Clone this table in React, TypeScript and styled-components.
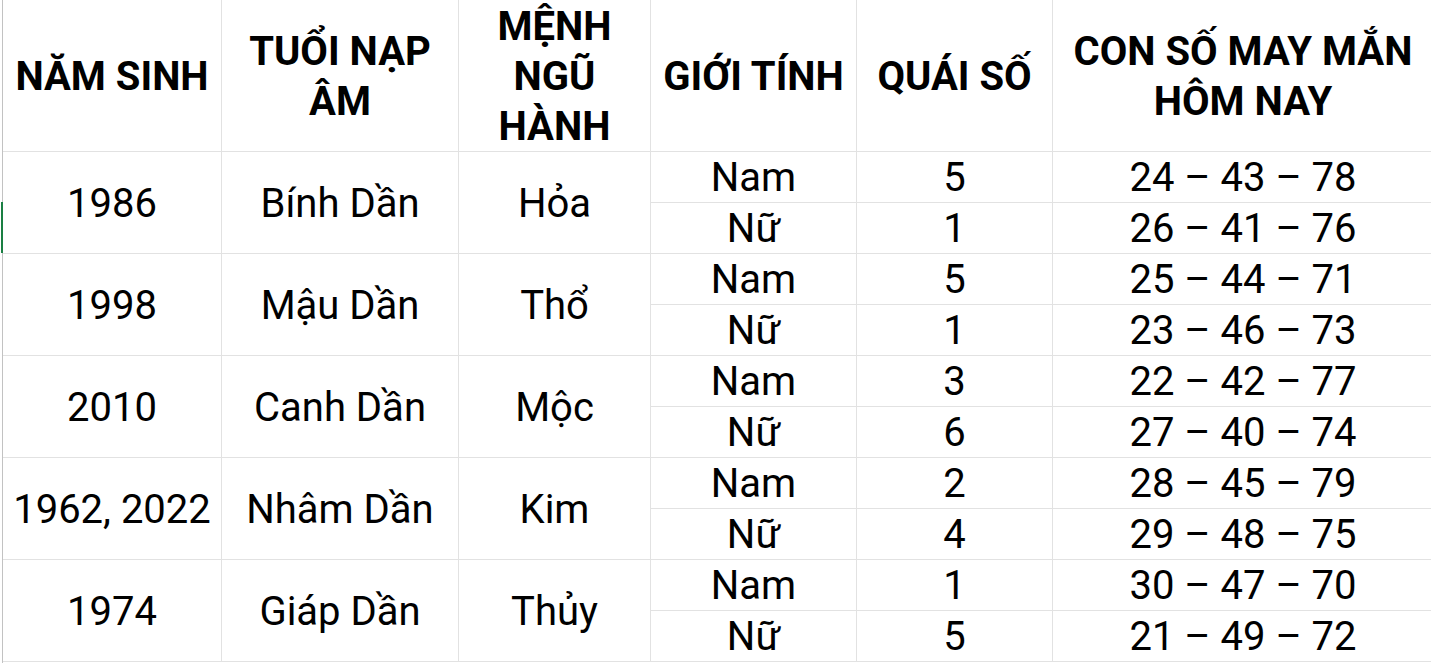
import React from "react";
import styled, { createGlobalStyle } from "styled-components";

const Global = createGlobalStyle`
  html, body {
    margin: 0;
    padding: 0;
    background: #ffffff;
    overflow: hidden;
  }
  body {
    font-family: Roboto, "Noto Sans", "Liberation Sans", sans-serif;
    color: #000000;
  }
`;

const Sheet = styled.div`
  position: relative;
  width: 1431px;
  height: 663px;
  box-sizing: border-box;
  margin-left: 2px;
  border-left: 1px solid #c2c2c2;
  overflow: visible;
`;

const Grid = styled.div`
  display: grid;
  grid-template-columns: 218px 236px 191px 205px 195px 1fr;
  grid-template-rows: 151px repeat(10, 50px);
  gap: 1px;
  background: #e2e2e2;
  padding-bottom: 1px;
`;

const HeadCell = styled.div`
  background: #ffffff;
  display: flex;
  align-items: center;
  justify-content: center;
  text-align: center;
  padding-top: 2px;
  box-sizing: border-box;
  font-weight: 700;
  font-size: 40px;
  line-height: 50px;
  white-space: nowrap;
  overflow: hidden;
`;

const Cell = styled.div<{ $span?: number }>`
  background: #ffffff;
  display: flex;
  align-items: center;
  justify-content: center;
  padding-top: 2px;
  box-sizing: border-box;
  font-size: 40px;
  font-weight: 400;
  line-height: 48px;
  white-space: nowrap;
  overflow: hidden;
  grid-row: span ${(p) => p.$span ?? 1};
`;

const Selection = styled.div`
  position: absolute;
  left: -2px;
  top: 202px;
  width: 2px;
  height: 51px;
  background: #1a7f43;
`;

type Person = { gender: string; quai: string; nums: string };
type Group = { year: string; tuoi: string; menh: string; people: Person[] };

const data: Group[] = [
  {
    year: "1986",
    tuoi: "Bính Dần",
    menh: "Hỏa",
    people: [
      { gender: "Nam", quai: "5", nums: "24 – 43 – 78" },
      { gender: "Nữ", quai: "1", nums: "26 – 41 – 76" },
    ],
  },
  {
    year: "1998",
    tuoi: "Mậu Dần",
    menh: "Thổ",
    people: [
      { gender: "Nam", quai: "5", nums: "25 – 44 – 71" },
      { gender: "Nữ", quai: "1", nums: "23 – 46 – 73" },
    ],
  },
  {
    year: "2010",
    tuoi: "Canh Dần",
    menh: "Mộc",
    people: [
      { gender: "Nam", quai: "3", nums: "22 – 42 – 77" },
      { gender: "Nữ", quai: "6", nums: "27 – 40 – 74" },
    ],
  },
  {
    year: "1962, 2022",
    tuoi: "Nhâm Dần",
    menh: "Kim",
    people: [
      { gender: "Nam", quai: "2", nums: "28 – 45 – 79" },
      { gender: "Nữ", quai: "4", nums: "29 – 48 – 75" },
    ],
  },
  {
    year: "1974",
    tuoi: "Giáp Dần",
    menh: "Thủy",
    people: [
      { gender: "Nam", quai: "1", nums: "30 – 47 – 70" },
      { gender: "Nữ", quai: "5", nums: "21 – 49 – 72" },
    ],
  },
];

export default function App() {
  return (
    <>
      <Global />
      <Sheet>
        <Grid>
          <HeadCell>NĂM SINH</HeadCell>
          <HeadCell>
            TUỔI NẠP
            <br />
            ÂM
          </HeadCell>
          <HeadCell>
            MỆNH
            <br />
            NGŨ
            <br />
            HÀNH
          </HeadCell>
          <HeadCell>GIỚI TÍNH</HeadCell>
          <HeadCell>QUÁI SỐ</HeadCell>
          <HeadCell>
            CON SỐ MAY MẮN
            <br />
            HÔM NAY
          </HeadCell>
          {data.map((g) => (
            <React.Fragment key={g.year}>
              <Cell $span={2}>{g.year}</Cell>
              <Cell $span={2}>{g.tuoi}</Cell>
              <Cell $span={2}>{g.menh}</Cell>
              {g.people.map((p) => (
                <React.Fragment key={p.gender}>
                  <Cell>{p.gender}</Cell>
                  <Cell>{p.quai}</Cell>
                  <Cell>{p.nums}</Cell>
                </React.Fragment>
              ))}
            </React.Fragment>
          ))}
        </Grid>
        <Selection />
      </Sheet>
    </>
  );
}
